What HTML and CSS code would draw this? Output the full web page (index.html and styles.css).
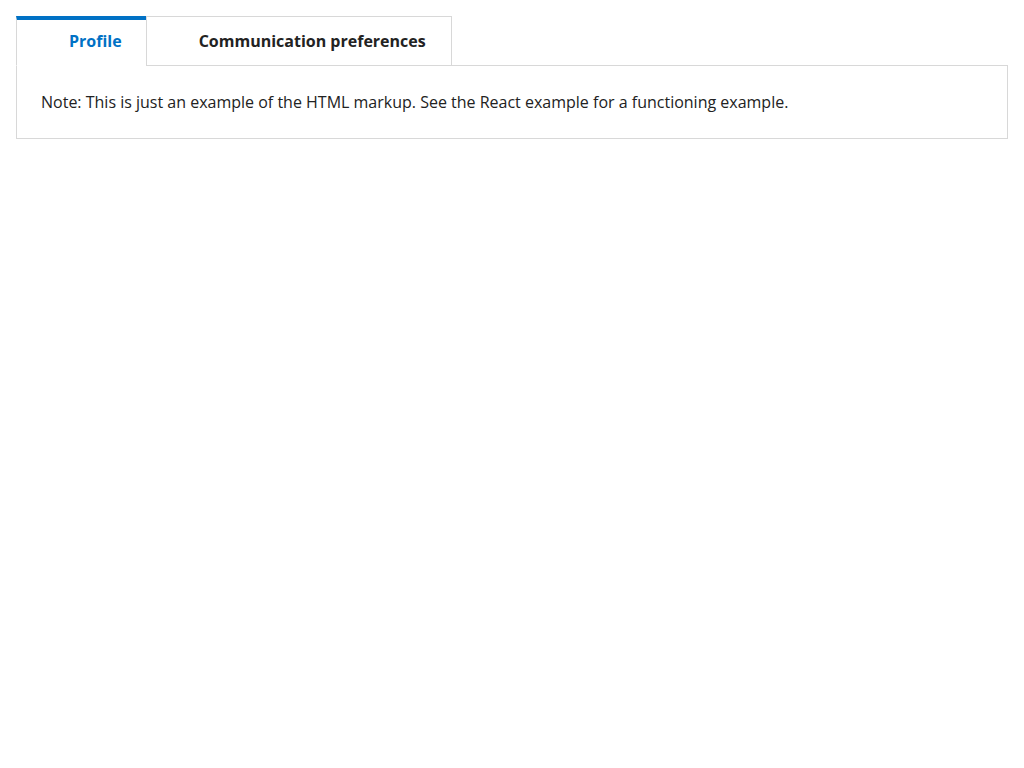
FILE: index.html
```html
<!DOCTYPE html>
<html lang="en">
<head>
<meta charset="utf-8">
<title>Tabs</title>
<link rel="stylesheet" href="styles.css">
</head>
<body>
<div class="tabs">
  <ul class="tab-list" role="tablist">
    <li class="tab tab--active" role="tab">Profile</li>
    <li class="tab" role="tab">Communication preferences</li>
  </ul>
  <div class="tab-panel" role="tabpanel">
    <p class="note">Note: This is just an example of the HTML markup. See the React example for a functioning example.</p>
  </div>
</div>
</body>
</html>
```
FILE: styles.css
```css
html, body {
  margin: 0;
  padding: 0;
  background: #ffffff;
}
body {
  padding: 16px;
  font-family: "Open Sans", "Noto Sans", "Liberation Sans", sans-serif;
  font-size: 16px;
  line-height: 24px;
  color: #222222;
}
.tabs {
  display: flex;
  flex-direction: column;
}
.tab-list {
  display: flex;
  margin: 0;
  padding: 0;
  list-style: none;
}
.tab {
  position: relative;
  z-index: 1;
  margin-bottom: -1px;
  padding: 12px 25px 12px 52px;
  border: 1px solid #d8d8d8;
  background: #ffffff;
  font-weight: 700;
  color: #222222;
  white-space: nowrap;
}
.tab--active {
  padding-top: 9px;
  padding-right: 24px;
  border-top: 4px solid #0071c5;
  border-right-width: 0;
  border-bottom-color: #ffffff;
  color: #0071c5;
}
.tab-panel {
  border: 1px solid #d8d8d8;
  padding: 24px;
}
.note {
  margin: 0;
}
```
